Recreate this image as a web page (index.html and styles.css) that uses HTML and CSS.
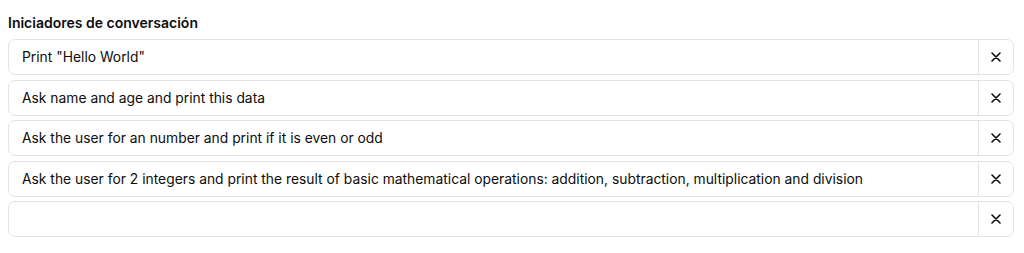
FILE: index.html
```html
<!DOCTYPE html>
<html lang="es">
<head>
<meta charset="utf-8">
<link rel="stylesheet" href="styles.css">
</head>
<body>
<section class="starters">
  <h3 class="title">Iniciadores de conversación</h3>
  <div class="list">
    <div class="row"><div class="field">Print "Hello World"</div><button class="remove" aria-label="Eliminar"><svg viewBox="0 0 10 10" width="10" height="10"><path d="M1 1L9 9M9 1L1 9"/></svg></button></div>
    <div class="row"><div class="field">Ask name and age and print this data</div><button class="remove" aria-label="Eliminar"><svg viewBox="0 0 10 10" width="10" height="10"><path d="M1 1L9 9M9 1L1 9"/></svg></button></div>
    <div class="row"><div class="field">Ask the user for an number and print if it is even or odd</div><button class="remove" aria-label="Eliminar"><svg viewBox="0 0 10 10" width="10" height="10"><path d="M1 1L9 9M9 1L1 9"/></svg></button></div>
    <div class="row"><div class="field">Ask the user for 2 integers and print the result of basic mathematical operations: addition, subtraction, multiplication and division</div><button class="remove" aria-label="Eliminar"><svg viewBox="0 0 10 10" width="10" height="10"><path d="M1 1L9 9M9 1L1 9"/></svg></button></div>
    <div class="row"><div class="field"></div><button class="remove" aria-label="Eliminar"><svg viewBox="0 0 10 10" width="10" height="10"><path d="M1 1L9 9M9 1L1 9"/></svg></button></div>
  </div>
</section>
</body>
</html>
```

FILE: styles.css
```css
html, body {
  margin: 0;
  padding: 0;
  background: #ffffff;
}
body {
  font-family: Inter, "Noto Sans", "Liberation Sans", sans-serif;
  color: #0d0d0d;
  -webkit-font-smoothing: antialiased;
}
.starters {
  padding: 14px 10px 0 8px;
}
.title {
  margin: 0 0 7px 0;
  font-size: 14px;
  line-height: 18px;
  font-weight: 600;
}
.list {
  display: flex;
  flex-direction: column;
  gap: 4.6px;
}
.row {
  display: flex;
  height: 36px;
  box-sizing: border-box;
  border: 1px solid #e3e3e3;
  border-radius: 7px;
  overflow: hidden;
}
.field {
  flex: 1;
  display: flex;
  align-items: center;
  padding: 0 13px;
  font-size: 13.85px;
  color: #0d0d0d;
  white-space: nowrap;
  overflow: hidden;
}
.remove {
  width: 35px;
  border: 0;
  border-left: 1px solid #e3e3e3;
  background: transparent;
  display: flex;
  align-items: center;
  justify-content: center;
  padding: 0;
  cursor: pointer;
}
.remove svg path {
  stroke: #0d0d0d;
  stroke-width: 1.6;
  stroke-linecap: round;
  fill: none;
}
```
